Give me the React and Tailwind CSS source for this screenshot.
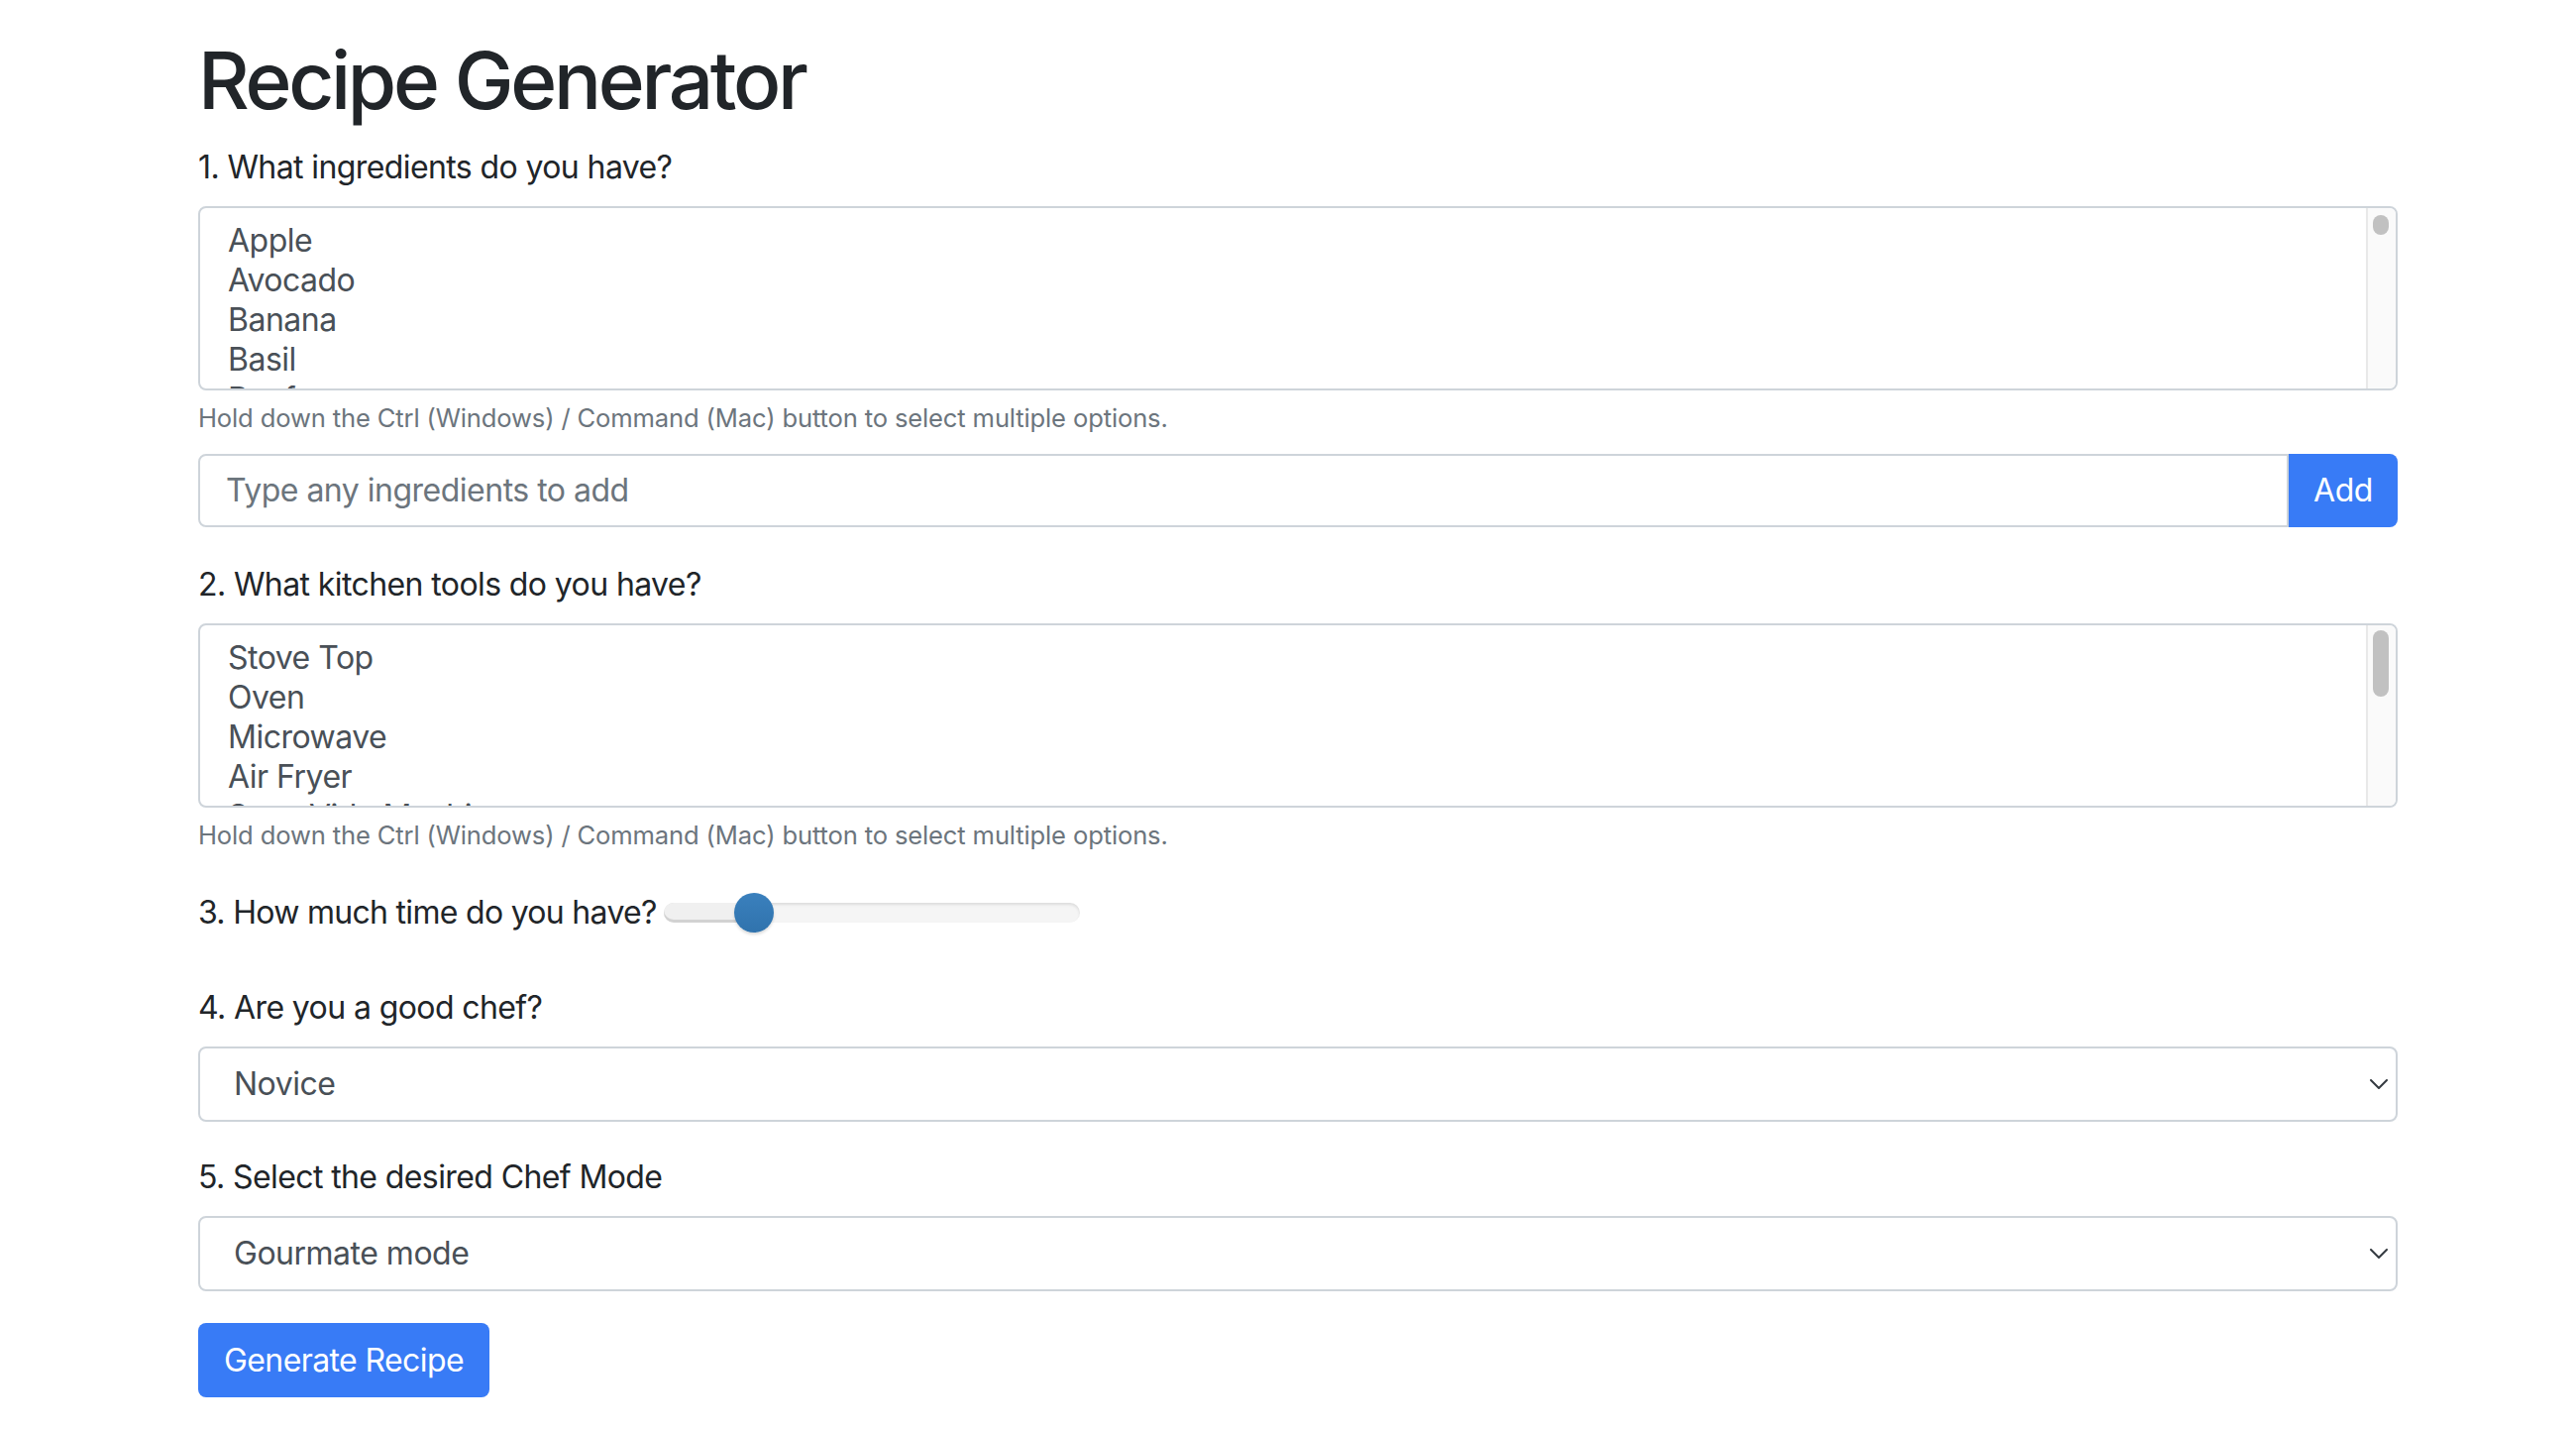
import { useState } from 'react';

const ingredients = ['Apple', 'Avocado', 'Banana', 'Basil', 'Beef', 'Bell Pepper', 'Broccoli', 'Butter'];
const tools = ['Stove Top', 'Oven', 'Microwave', 'Air Fryer', 'Sous Vide Machine', 'Blender'];

function ListBox({ items, thumbTop, thumbHeight }) {
  return (
    <div className="flex h-[186px] rounded-[8px] border-2 border-[#ced4da] overflow-hidden bg-white">
      <div className="flex-1 overflow-hidden pl-[28px] pt-[13px]">
        {items.map((item) => (
          <div key={item} className="h-[40px] text-[32px] leading-[40px] tracking-[-0.5px] text-[#495057]">
            {item}
          </div>
        ))}
      </div>
      <div className="relative w-[30px] bg-[#fafafa] border-l-2 border-[#e8e8e8]">
        <div
          className="absolute left-[5px] w-[16px] rounded-full bg-[#c1c1c1]"
          style={{ top: thumbTop, height: thumbHeight }}
        />
      </div>
    </div>
  );
}

function HelpText() {
  return (
    <p className="mt-[9px] text-[25.6px] leading-[38px] tracking-[-0.15px] text-[#6c757d]">
      Hold down the Ctrl (Windows) / Command (Mac) button to select multiple options.
    </p>
  );
}

function SelectBox({ value }) {
  return (
    <div className="flex items-center justify-between h-[76px] rounded-[8px] border-2 border-[#ced4da] bg-white pl-[34px] pr-[8px]">
      <span className="text-[32px] tracking-[-0.5px] text-[#495057]">{value}</span>
      <svg width="18" height="10" viewBox="0 0 18 10" fill="none">
        <path d="M1 1l8 8 8-8" stroke="#343a40" strokeWidth="2" strokeLinecap="round" strokeLinejoin="round" />
      </svg>
    </div>
  );
}

export default function App() {
  const [time] = useState(20);

  return (
    <div className="min-h-screen bg-white font-['Inter',sans-serif] text-[#212529]">
      <div className="ml-[200px] w-[2220px] pt-[33px]">
        <h1 className="text-[80px] font-medium leading-[96px] tracking-[-3.3px]">Recipe Generator</h1>

        <label className="block mt-[16px] text-[32px] leading-[48px] tracking-[-0.6px]">1. What ingredients do you have?</label>
        <div className="mt-[15px]">
          <ListBox items={ingredients} thumbTop={7} thumbHeight={20} />
        </div>
        <HelpText />

        <div className="flex mt-[17px] h-[74px]">
          <input
            className="flex-1 rounded-l-[8px] border-2 border-[#ced4da] px-[26px] text-[32px] tracking-[-0.5px] text-[#495057] placeholder-[#6c757d] outline-none"
            placeholder="Type any ingredients to add"
          />
          <button className="w-[110px] rounded-r-[8px] bg-[#387bf6] text-[32px] tracking-[-0.5px] text-white">Add</button>
        </div>

        <label className="block mt-[34px] text-[32px] leading-[48px] tracking-[-0.6px]">2. What kitchen tools do you have?</label>
        <div className="mt-[15px]">
          <ListBox items={tools} thumbTop={5} thumbHeight={67} />
        </div>
        <HelpText />

        <div className="flex items-center mt-[35px] h-[48px]">
          <label className="text-[32px] leading-[48px] tracking-[-0.7px]">3. How much time do you have?</label>
          <div className="relative ml-[7px] w-[420px] h-[20px] rounded-full bg-[#f5f5f5] shadow-[inset_0_2px_3px_rgba(0,0,0,0.1)]">
            <div className="absolute left-0 top-0 h-[20px] w-[90px] rounded-l-full bg-[#f0f0f0] shadow-[inset_0_-3px_0_rgba(0,0,0,0.12)]" />
            <div
              className="absolute top-[-10px] w-[40px] h-[40px] rounded-full bg-gradient-to-b from-[#3a80bd] to-[#3073ad] shadow-[0_2px_3px_rgba(0,0,0,0.15)]"
              style={{ left: 71 + (time - 20) }}
            />
          </div>
        </div>

        <label className="block mt-[48px] text-[32px] leading-[48px] tracking-[-0.6px]">4. Are you a good chef?</label>
        <div className="mt-[15px]">
          <SelectBox value="Novice" />
        </div>

        <label className="block mt-[32px] text-[32px] leading-[48px] tracking-[-0.6px]">5. Select the desired Chef Mode</label>
        <div className="mt-[15px]">
          <SelectBox value="Gourmate mode" />
        </div>

        <button className="mt-[32px] h-[75px] px-[26px] rounded-[8px] bg-[#387bf6] text-[32px] tracking-[-0.6px] text-white">
          Generate Recipe
        </button>
      </div>
    </div>
  );
}
